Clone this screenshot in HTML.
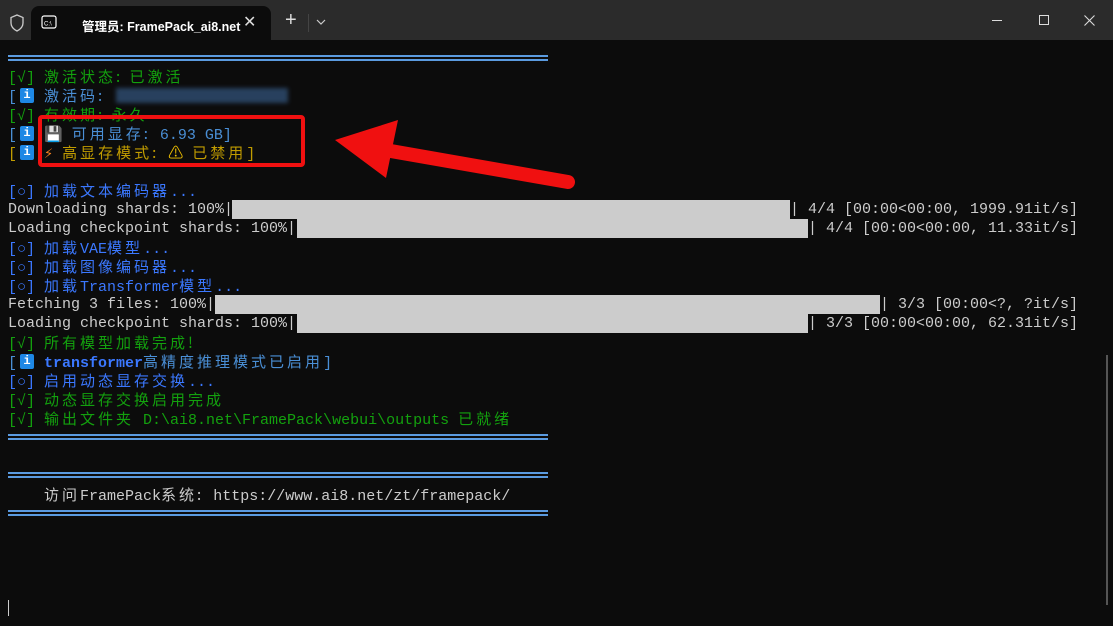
<!DOCTYPE html>
<html><head><meta charset="utf-8"><style>
*{margin:0;padding:0;box-sizing:border-box}
body{width:1113px;height:626px;background:#0c0c0c;overflow:hidden;position:relative;font-family:"Liberation Mono","Noto Sans CJK SC",monospace;font-size:15px;color:#cccccc}
.tb{position:absolute;left:0;top:0;width:1113px;height:40px;background:#2b2b2b}
.tab{position:absolute;left:31px;top:6px;width:240px;height:34px;background:#0c0c0c;border-radius:8px 8px 0 0}
.ttl{position:absolute;left:82px;top:16px;font-family:"Liberation Sans","Noto Sans CJK SC",sans-serif;font-size:12.5px;color:#fff;font-weight:bold}
.r{position:absolute;left:8px;white-space:pre;line-height:19px;height:19px}
.c{letter-spacing:3px;font-family:"Noto Sans CJK SC",sans-serif}
.g{color:#13a10e}.b{color:#3b78ff}.lb{color:#4a8fd6}.y{color:#c19c00}
.dl{position:absolute;left:8px;width:540px;height:6px;border-top:2px solid #5b9be0;border-bottom:2px solid #5b9be0}
.bar{position:absolute;height:19px;background:#cccccc}
.iw{display:inline-block;width:27px;height:19px;position:relative;vertical-align:top}
.ii{position:absolute;left:3px;top:2px;width:14px;height:15px;background:#1e88e5;color:#fff;font-size:12px;line-height:15px;text-align:center;border-radius:2px;font-weight:bold}
</style></head><body>
<div class="tb"></div>
<div class="tab"></div>
<svg style="position:absolute;left:9px;top:14px" width="16" height="18"><path d="M8 1 L14 3.5 V9 C14 13 11 15.5 8 17 C5 15.5 2 13 2 9 V3.5 Z" fill="none" stroke="#ccc" stroke-width="1.3"/></svg>
<svg style="position:absolute;left:41px;top:15px" width="16" height="14"><rect x="1" y="1" width="14" height="12" rx="2" fill="none" stroke="#fff" stroke-width="1.2"/><text x="3" y="10.5" font-size="6" fill="#fff" font-family="Liberation Sans">C:\</text></svg>
<div class="ttl">管理员: FramePack_ai8.net</div>
<div style="position:absolute;left:243px;top:12px;color:#ddd;font-family:'Liberation Sans';font-size:16px">✕</div>
<div style="position:absolute;left:285px;top:9px;color:#ddd;font-family:'Liberation Sans';font-size:20px">+</div>
<div style="position:absolute;left:308px;top:14px;width:1px;height:18px;background:#444"></div>
<svg style="position:absolute;left:316px;top:19px" width="10" height="6"><path d="M1 1 L5 5 L9 1" stroke="#ccc" fill="none" stroke-width="1.2"/></svg>
<div style="position:absolute;left:992px;top:20px;width:10px;height:1px;background:#ddd"></div>
<div style="position:absolute;left:1039px;top:15px;width:10px;height:10px;border:1px solid #ddd"></div>
<svg style="position:absolute;left:1084px;top:15px" width="11" height="11"><path d="M0.5 0.5 L10.5 10.5 M10.5 0.5 L0.5 10.5" stroke="#ddd" stroke-width="1.1"/></svg>

<div class="dl" style="top:55px"></div>
<div class="r g" style="top:67px">[√] <span class="c">激活状态: 已激活</span></div>
<div class="r lb" style="top:86px">[<span class="iw"><span class="ii">i</span></span><span class="c">激活码:</span></div>
<div style="position:absolute;left:116px;top:88px;width:172px;height:15px;background:#2f4e73;filter:blur(2px);opacity:.8"></div>
<div class="r g" style="top:105px">[√] <span class="c">有效期: 永久</span></div>
<div class="r lb" style="top:124px">[<span class="iw"><span class="ii">i</span></span><span style="color:#d0a0d0">💾</span> <span class="c">可用显存:</span> 6.93 GB]</div>
<div class="r y" style="top:143px">[<span class="iw"><span class="ii">i</span></span><span style="color:#f08020">⚡</span> <span class="c">高显存模式:</span> <span style="color:#f0c000">⚠</span> <span class="c">已禁用</span>]</div>
<div style="position:absolute;left:38px;top:115px;width:267px;height:52px;border:4px solid #f01010;border-radius:4px"></div>
<svg style="position:absolute;left:0;top:0" width="1113" height="626"><path d="M568 182 L385 150" stroke="#f01010" stroke-width="14" stroke-linecap="round"/><path d="M335 140 L398 120 L386 178 Z" fill="#f01010"/></svg>

<div class="r b" style="top:181px">[○] <span class="c">加载文本编码器</span>...</div>
<div class="r" style="top:200px">Downloading shards: 100%|</div><div class="bar" style="left:232px;width:558px;top:200px"></div><div class="r" style="left:790px;top:200px">| 4/4 [00:00&lt;00:00, 1999.91it/s]</div>
<div class="r" style="top:219px">Loading checkpoint shards: 100%|</div><div class="bar" style="left:297px;width:511px;top:219px"></div><div class="r" style="left:808px;top:219px">| 4/4 [00:00&lt;00:00, 11.33it/s]</div>
<div class="r b" style="top:238px">[○] <span class="c">加载</span>VAE<span class="c">模型</span>...</div>
<div class="r b" style="top:257px">[○] <span class="c">加载图像编码器</span>...</div>
<div class="r b" style="top:276px">[○] <span class="c">加载</span>Transformer<span class="c">模型</span>...</div>
<div class="r" style="top:295px">Fetching 3 files: 100%|</div><div class="bar" style="left:215px;width:665px;top:295px"></div><div class="r" style="left:880px;top:295px">| 3/3 [00:00&lt;?, ?it/s]</div>
<div class="r" style="top:314px">Loading checkpoint shards: 100%|</div><div class="bar" style="left:297px;width:511px;top:314px"></div><div class="r" style="left:808px;top:314px">| 3/3 [00:00&lt;00:00, 62.31it/s]</div>
<div class="r g" style="top:333px">[√] <span class="c">所有模型加载完成!</span></div>
<div class="r lb" style="top:352px">[<span class="iw"><span class="ii">i</span></span><b style="color:#3b78ff">transformer</b><span class="c">高精度推理模式已启用</span>]</div>
<div class="r b" style="top:371px">[○] <span class="c">启用动态显存交换</span>...</div>
<div class="r g" style="top:390px">[√] <span class="c">动态显存交换启用完成</span></div>
<div class="r g" style="top:409px">[√] <span class="c">输出文件夹</span> D:\ai8.net\FramePack\webui\outputs <span class="c">已就绪</span></div>
<div class="dl" style="top:434px"></div>
<div class="dl" style="top:472px"></div>
<div class="r" style="left:44px;top:485px"><span class="c">访问</span>FramePack<span class="c">系统:</span> https://www.ai8.net/zt/framepack/</div>
<div class="dl" style="top:510px"></div>
<div style="position:absolute;left:8px;top:600px;width:1px;height:16px;background:#ccc"></div>
<div style="position:absolute;left:1106px;top:355px;width:2px;height:250px;background:#555"></div>
</body></html>
